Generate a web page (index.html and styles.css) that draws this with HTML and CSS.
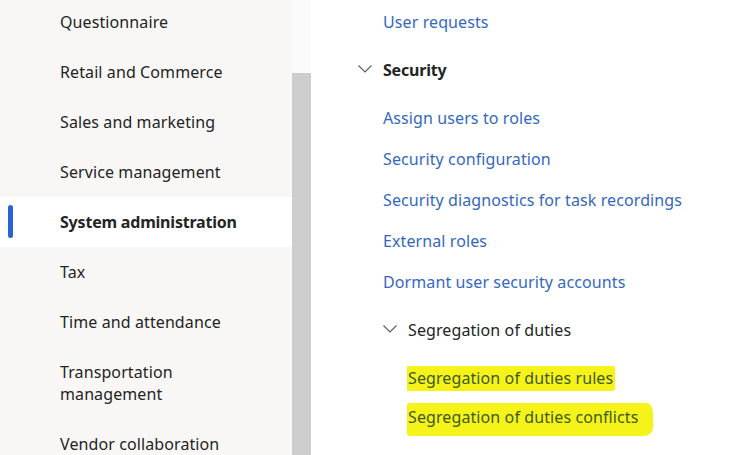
FILE: index.html
```html
<!DOCTYPE html>
<html lang="en">
<head>
<meta charset="utf-8">
<title>System administration</title>
<link rel="stylesheet" href="styles.css">
</head>
<body>
<div class="app">
  <nav class="nav">
    <ul class="nav-list">
      <li class="nav-item">Questionnaire</li>
      <li class="nav-item">Retail and Commerce</li>
      <li class="nav-item">Sales and marketing</li>
      <li class="nav-item">Service management</li>
      <li class="nav-item is-active">System administration</li>
      <li class="nav-item">Tax</li>
      <li class="nav-item">Time and attendance</li>
      <li class="nav-item">Transportation management</li>
      <li class="nav-item">Vendor collaboration</li>
    </ul>
  </nav>
  <div class="scrollbar"><div class="thumb"></div></div>
  <main class="content">
    <ul class="tree">
      <li class="link-row"><a class="link">User requests</a></li>
      <li class="group">
        <div class="group-head is-bold">
          <svg class="chev" width="14" height="8" viewBox="0 0 14 8"><path d="M0.5 0.5 L7 7 L13.5 0.5" fill="none" stroke="#5a5a5a" stroke-width="1.1"/></svg>
          <span>Security</span>
        </div>
        <ul class="sub">
          <li class="link-row"><a class="link">Assign users to roles</a></li>
          <li class="link-row"><a class="link">Security configuration</a></li>
          <li class="link-row"><a class="link">Security diagnostics for task recordings</a></li>
          <li class="link-row"><a class="link">External roles</a></li>
          <li class="link-row"><a class="link">Dormant user security accounts</a></li>
          <li class="group nested">
            <div class="group-head">
              <svg class="chev" width="14" height="8" viewBox="0 0 14 8"><path d="M0.5 0.5 L7 7 L13.5 0.5" fill="none" stroke="#5a5a5a" stroke-width="1.1"/></svg>
              <span>Segregation of duties</span>
            </div>
            <ul class="sub">
              <li class="link-row"><a class="link hl">Segregation of duties rules</a></li>
              <li class="link-row"><a class="link hl hl-wide">Segregation of duties conflicts</a></li>
            </ul>
          </li>
        </ul>
      </li>
    </ul>
  </main>
</div>
</body>
</html>
```
FILE: styles.css
```css
* { box-sizing: border-box; }
html, body { margin: 0; padding: 0; }
body {
  font-family: "Noto Sans", "Segoe UI", "Open Sans", sans-serif;
  font-size: 16px;
  letter-spacing: 0.1px;
  color: #242424;
  background: #ffffff;
  overflow: hidden;
}
ul { list-style: none; margin: 0; padding: 0; }

.app {
  display: flex;
  height: 455px;
  overflow: hidden;
}

/* left navigation */
.nav {
  width: 292px;
  flex: none;
  background: #f8f7f6;
  overflow: hidden;
}
.nav-list { margin-top: -3px; }
.nav-item {
  position: relative;
  padding: 14px 40px 14px 60px;
  line-height: 22px;
  min-height: 50px;
  color: #242424;
}
.nav-item.is-active {
  background: #ffffff;
  font-weight: 700;
  letter-spacing: -0.2px;
}
.nav-item.is-active::before {
  content: "";
  position: absolute;
  left: 8px;
  top: 8px;
  width: 5px;
  height: 33px;
  border-radius: 3px;
  background: #2a63d8;
}

/* scrollbar */
.scrollbar {
  width: 19px;
  flex: none;
  background: #fbfbfb;
  display: flex;
  flex-direction: column;
}
.thumb {
  margin-top: 73px;
  flex: 1;
  background: #cdcdcd;
}

/* main content */
.content {
  flex: 1;
  background: #ffffff;
  padding-left: 47px;
}
.tree { padding-top: 1px; }
.link-row {
  height: 41px;
  display: flex;
  align-items: center;
  padding-left: 25px;
}
.link {
  color: #3468c0;
  text-decoration: none;
  line-height: 20px;
}
.group-head {
  height: 56px;
  display: flex;
  align-items: center;
  gap: 11px;
  color: #242424;
}
.group-head.is-bold { height: 55px; font-weight: 700; letter-spacing: -0.2px; }
.chev { flex: none; margin-top: -2px; }
.nested { padding-left: 25px; }
.nested .link-row { padding-left: 25px; margin-left: -25px; }
.nested .sub { padding-left: 25px; }

/* marker highlight */
.hl {
  background: #f6f31a;
  color: #3d5a25;
  padding: 2px 2px 3px 1px;
  margin-left: -1px;
  border-radius: 1px 2px 3px 1px;
}
.hl-wide {
  padding: 4px 15px 9px 1px;
  border-radius: 2px 6px 10px 2px / 2px 10px 8px 3px;
}
```
